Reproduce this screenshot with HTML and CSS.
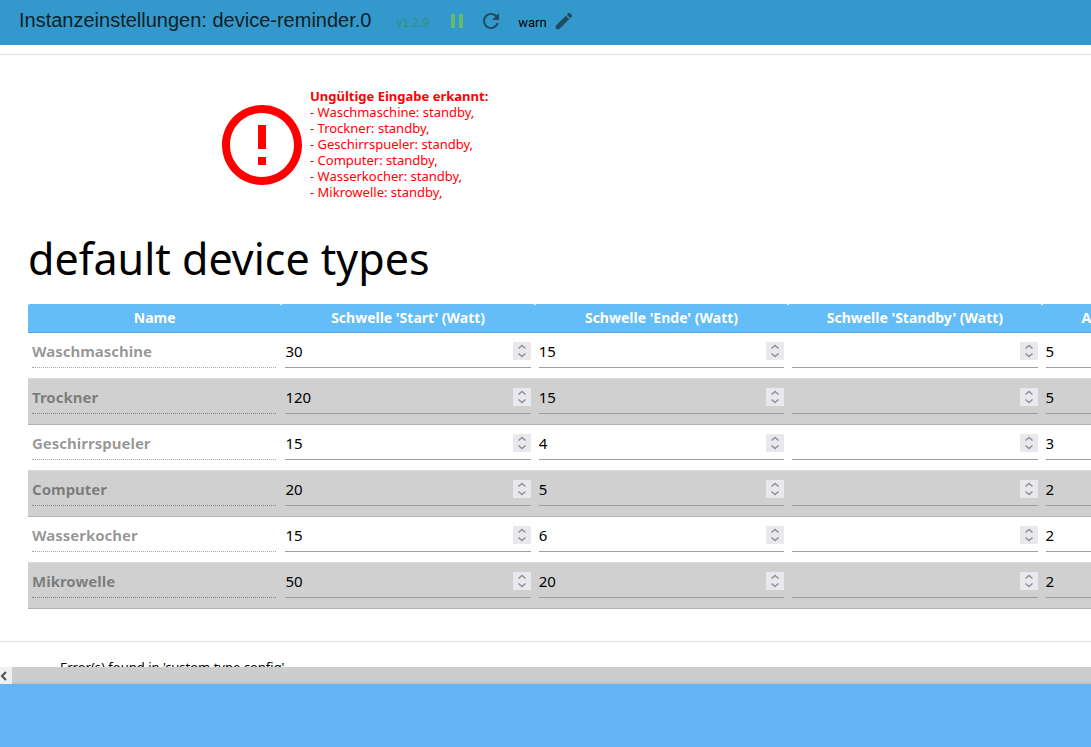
FILE: index.html
```html
<!DOCTYPE html>
<html lang="de">
<head>
<meta charset="utf-8">
<title>Instanzeinstellungen: device-reminder.0</title>
<link rel="stylesheet" href="styles.css">
</head>
<body>
<svg class="defs" aria-hidden="true">
  <symbol id="up" viewBox="0 0 18 9"><path d="M5.500 6.500l3.500-3 3.500 3"/></symbol>
  <symbol id="down" viewBox="0 0 18 9"><path d="M5.500 2.500l3.500 3 3.500-3"/></symbol>
</svg>
<header class="topbar">
  <h1 class="title">Instanzeinstellungen: device-reminder.0</h1>
  <span class="version">v1.2.9</span>
  <button class="icon-btn pause" type="button" aria-label="Pause"><svg viewBox="0 0 24 24"><path d="M6 19h4V5H6v14zm8-14v14h4V5h-4z"/></svg></button>
  <button class="icon-btn" type="button" aria-label="Neu laden"><svg viewBox="0 0 24 24"><path d="M17.65 6.35C16.2 4.9 14.21 4 12 4c-4.42 0-7.99 3.58-7.99 8s3.57 8 7.99 8c3.73 0 6.84-2.55 7.73-6h-2.08c-.82 2.33-3.04 4-5.65 4-3.31 0-6-2.69-6-6s2.69-6 6-6c1.66 0 3.14.69 4.22 1.78L13 11h7V4l-2.35 2.35z"/></svg></button>
  <span class="level">warn</span>
  <button class="icon-btn edit" type="button" aria-label="Bearbeiten"><svg viewBox="0 0 24 24"><path d="M3 17.25V21h3.75L17.81 9.94l-3.75-3.75L3 17.25zM20.71 7.04c.39-.39.39-1.02 0-1.41l-2.34-2.34c-.39-.39-1.02-.39-1.41 0l-1.83 1.83 3.75 3.75 1.83-1.83z"/></svg></button>
</header>
<main class="content">
  <section class="panel">
    <div class="alert" role="alert">
      <svg class="alert-icon" viewBox="0 0 24 24" aria-hidden="true"><path d="M11 15h2v2h-2zm0-8h2v6h-2zm.99-5C6.47 2 2 6.48 2 12s4.470 10 9.990 10C17.520 22 22 17.520 22 12S17.520 2 11.990 2zM12 20c-4.420 0-8-3.580-8-8s3.580-8 8-8 8 3.580 8 8-3.580 8-8 8z"/></svg>
      <div class="alert-text">
        <strong>Ungültige Eingabe erkannt:</strong>
        <div>- Waschmaschine: standby,</div>
        <div>- Trockner: standby,</div>
        <div>- Geschirrspueler: standby,</div>
        <div>- Computer: standby,</div>
        <div>- Wasserkocher: standby,</div>
        <div>- Mikrowelle: standby,</div>
      </div>
    </div>
    <h2 class="heading">default device types</h2>
    <table class="devices">
      <thead><tr><th>Name</th><th>Schwelle 'Start' (Watt)</th><th>Schwelle 'Ende' (Watt)</th><th>Schwelle 'Standby' (Watt)</th><th>Anzahl Messwerte 'Start'</th></tr></thead>
      <tbody id="rows"></tbody>
    </table>
  </section>
  <section class="errors">Error(s) found in 'custom type config'</section>
</main>
<div class="scrollbar"><button class="scroll-left" type="button" aria-label="Nach links"><svg viewBox="0 0 12 17"><path d="M6 5L2 9l4 4"/></svg></button></div>
<footer class="bottombar"></footer>
<script src="rows.js"></script>
</body>
</html>
```
FILE: styles.css
```css
* { box-sizing: border-box; }
body {
  margin: 0;
  height: 100vh;
  display: flex;
  flex-direction: column;
  overflow: hidden;
  background: #fff;
  color: #000;
  font-family: "Noto Sans", "Open Sans", sans-serif;
  font-size: 13px;
}
button { border: 0; padding: 0; background: none; }
.defs { display: none; }
.topbar {
  flex: none;
  display: flex;
  align-items: center;
  height: 45px;
  padding: 0 19px 3px;
  background: #3399cc;
}
.title { margin: 0 0 2px; font: 20px/24px "Liberation Sans", sans-serif; color: #0b1f29; }
.version { margin: 3px 16px 0 25px; font: 12px/20px "Liberation Sans", sans-serif; color: #35946f; }
.icon-btn { flex: none; width: 24px; height: 24px; margin-right: 10px; fill: #1f4c61; }
.icon-btn svg { display: block; width: 100%; height: 100%; }
.pause { fill: #66bb6a; }
.level { margin: 3px 6px 0 5px; font: 13px/20px Roboto, sans-serif; }
.edit { width: 22px; height: 22px; }
.content { flex: 1; min-height: 0; overflow: hidden; padding-top: 9px; }
.panel { border: solid #ddd; border-width: 1px 0; padding: 33px 28px 32px; }
.alert { display: flex; align-items: center; padding-left: 186px; color: #f00; }
.alert-icon { width: 96px; height: 96px; fill: #f00; }
.alert-text { padding-bottom: 2px; line-height: 16px; }
.alert-text strong { display: block; }
.heading { margin: 29px 0 18px; font-size: 43px; line-height: 55px; font-weight: 400; }
.devices { width: 1267px; table-layout: fixed; border-collapse: separate; border-spacing: 0; }
.devices th {
  height: 29px;
  padding: 0;
  background: #64bdf7;
  border-bottom: 1px solid #52a8e0;
  border-radius: 2px 2px 0 0;
  color: #fff;
  font-size: 14px;
  line-height: 20px;
}
.devices td { height: 46px; padding: 0 4px 10px; border-bottom: 1px solid #d9d9d9; }
.devices tr:nth-child(even) td { background: #d0d0d0; border-color: #b3b3b3; }
.field { display: flex; align-items: center; height: 35px; padding-top: 2px; border-bottom: 1px solid #9e9e9e; }
.field input {
  flex: 1;
  min-width: 0;
  width: 100%;
  height: 32px;
  padding: 0;
  border: 0;
  background: none;
  color: #000;
  font: 15px/22px "Noto Sans", "Open Sans", sans-serif;
  appearance: textfield;
}
.name { border-bottom: 1px dotted rgba(0, 0, 0, .35); margin-right: 1px; }
.name input { font-weight: 700; color: rgba(0, 0, 0, .42); }
.spin { flex: none; width: 18px; height: 18px; background: #e9e9ed; }
.spin button { display: block; width: 18px; height: 9px; }
.spin svg { display: block; width: 18px; height: 9px; fill: none; stroke: #8f8f9d; stroke-width: 1.5; }
.errors { padding: 15px 60px; line-height: 20px; }
.scrollbar { flex: none; height: 17px; background: linear-gradient(#cdcdcd 80%, #c2c2c2); }
.scroll-left { display: block; width: 12px; height: 17px; background: #f0f0f0; }
.scroll-left svg { display: block; width: 12px; height: 17px; fill: none; stroke: #505050; stroke-width: 2; }
.bottombar { flex: none; height: 63px; background: #64b5f6; }
```
FILE: rows.js
```js
const columns = ["Schwelle 'Start' (Watt)", "Schwelle 'Ende' (Watt)", "Schwelle 'Standby' (Watt)", "Anzahl Messwerte 'Start'"];
const devices = [
  ["Waschmaschine", 30, 15, "", 5],
  ["Trockner", 120, 15, "", 5],
  ["Geschirrspueler", 15, 4, "", 3],
  ["Computer", 20, 5, "", 2],
  ["Wasserkocher", 15, 6, "", 2],
  ["Mikrowelle", 50, 20, "", 2]
];
const numberCell = (device, value, i) => `<td><div class="field">
  <input type="number" value="${value}" aria-label="${device}: ${columns[i]}">
  <div class="spin"><button type="button" tabindex="-1" aria-label="Erhöhen"><svg><use href="#up"/></svg></button><button type="button" tabindex="-1" aria-label="Verringern"><svg><use href="#down"/></svg></button></div>
</div></td>`;
document.getElementById("rows").innerHTML = devices.map(([name, ...values]) =>
  `<tr><td><div class="field name"><input type="text" value="${name}" aria-label="Name" disabled></div></td>${values.map((v, i) => numberCell(name, v, i)).join("")}</tr>`
).join("");
```
